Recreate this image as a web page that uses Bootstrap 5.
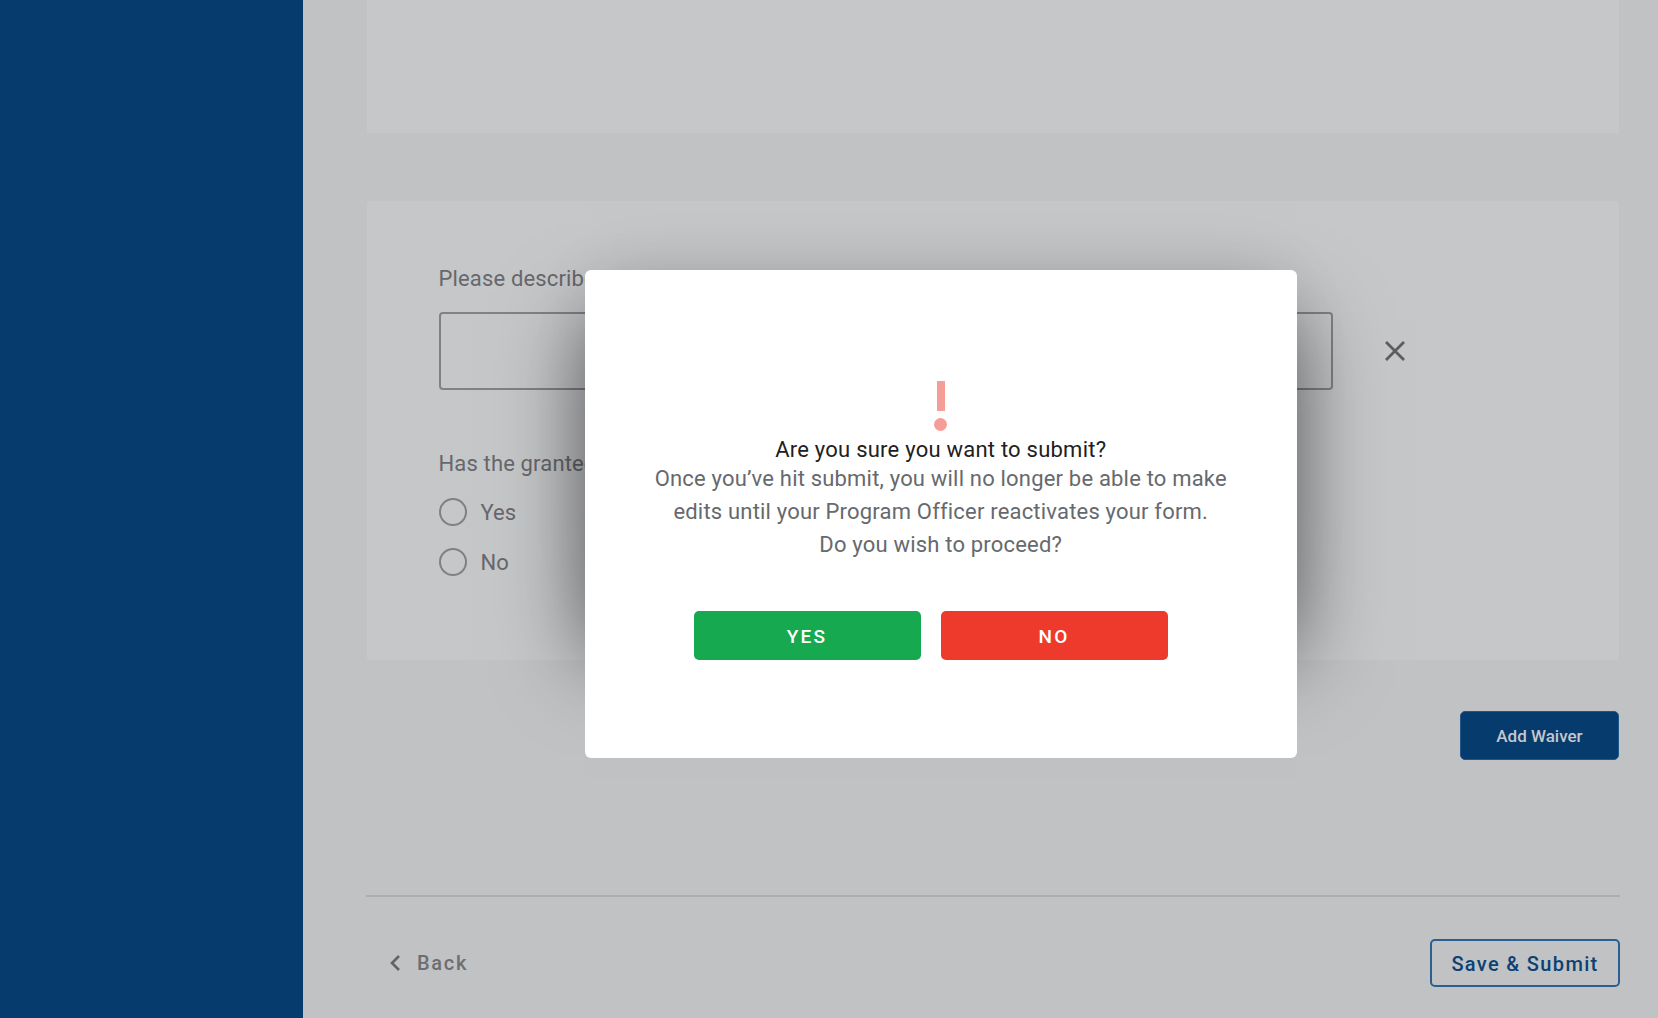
<!DOCTYPE html>
<html>
<head>
    <meta charset="UTF-8">
    <meta name="viewport" content="width=device-width, initial-scale=1">
    <title>Save &amp; Submit</title>
    <link href="https://cdn.jsdelivr.net/npm/bootstrap@5.3.0/dist/css/bootstrap.min.css" rel="stylesheet">
    <style>
        html, body {
            height: 100%;
            overflow: hidden;
        }

        body {
            background-color: #c1c2c4;
            font-family: "Roboto", "Liberation Sans", sans-serif;
            color: #67686c;
        }

        .page-wrap {
            height: 1018px;
        }

        .side-bar {
            width: 302.5px;
            background-color: #063b6d;
        }

        .main-area {
            padding: 0 38px 0 64.5px;
        }

        .panel-top {
            height: 133px;
            margin-right: 1px;
            background-color: #c6c7c9;
        }

        .panel-form {
            height: 459px;
            margin-top: 68px;
            margin-right: 1px;
            padding: 63px 0 0 71.5px;
            background-color: #c6c7c9;
            border-radius: 3px;
        }

        .field-label {
            font-size: 22px;
            line-height: 30px;
            letter-spacing: 0.15px;
            margin-bottom: 18px;
        }

        .desc-box {
            width: 894px;
            height: 78px;
            background-color: transparent;
            border: 2px solid #818286;
            border-radius: 4px;
        }

        .close-x {
            margin-left: 51px;
        }

        .grant-label {
            margin-top: 59px;
            margin-bottom: 0;
        }

        .radio-row {
            height: 50px;
            font-size: 22px;
        }

        .radio-dot {
            width: 28px;
            height: 28px;
            border: 2px solid #808185;
            border-radius: 50%;
            margin-right: 14px;
        }

        .btn-waiver {
            width: 159px;
            height: 49px;
            margin-top: 51px;
            margin-right: 1px;
            padding: 3px 0 0;
            background-color: #063b6d;
            border: 1px solid #225688;
            border-radius: 5px;
            color: #c6c7c9;
            font-size: 17px;
            font-weight: 500;
        }

        .foot-line {
            margin-top: 135px;
            margin-left: -1px;
            border-top: 2px solid #adaeb2;
        }

        .foot-row {
            padding-top: 42px;
        }

        .back-link {
            margin-left: 22px;
            font-size: 20px;
            font-weight: 500;
            letter-spacing: 1.7px;
            color: #6d6e72;
            text-decoration: none;
        }

        .btn-save {
            width: 190px;
            height: 48px;
            padding: 2px 0 0;
            background-color: transparent;
            border: 2px solid #2a5f92;
            border-radius: 5px;
            color: #0c4173;
            font-size: 20px;
            font-weight: 500;
            letter-spacing: 1.35px;
        }

        .confirm-wrap {
            position: absolute;
            left: 584.5px;
            top: 270px;
            width: 712.5px;
            height: 488px;
        }

        /* shadow only shows on the sides, hardly any above and none below */
        .confirm-shade {
            position: absolute;
            top: 50px;
            bottom: 100px;
            left: 0;
            right: 0;
            box-shadow: 0 0 80px rgba(0, 0, 0, 0.55), 0 -60px 70px -20px rgba(0, 0, 0, 0.12);
        }

        .confirm-layer {
            position: relative;
            height: 100%;
            padding-top: 111px;
            background-color: #fff;
            border: 0;
            border-radius: 6px;
        }

        .warn-bar {
            width: 8px;
            height: 30px;
            background-color: #f59d97;
        }

        .warn-dot {
            width: 13px;
            height: 13px;
            margin-top: 7px;
            border-radius: 50%;
            background-color: #f59d97;
        }

        .confirm-title {
            margin: 7px 0 0;
            font-size: 22px;
            font-weight: 400;
            line-height: 24px;
            letter-spacing: 0.23px;
            color: #1f2022;
        }

        .confirm-text {
            margin: 0;
            font-size: 22px;
            line-height: 33px;
            letter-spacing: 0.19px;
            color: #66696d;
        }

        .confirm-btns {
            margin-top: 50px;
            margin-right: 20.5px;
            gap: 20px;
        }

        .btn-answer {
            width: 227px;
            height: 49px;
            padding: 3px 0 0;
            border: 0;
            border-radius: 5px;
            color: #fff;
            font-size: 19px;
            font-weight: 500;
            letter-spacing: 2.2px;
        }

        .btn-answer.is-yes {
            background-color: #17a94f;
        }

        .btn-answer.is-no {
            background-color: #ee3a2c;
        }
    </style>
</head>
<body>
    <div class="page-wrap d-flex">
        <div class="side-bar flex-shrink-0"></div>

        <div class="main-area flex-grow-1">
            <div class="panel-top"></div>

            <div class="panel-form">
                <div class="field-label">Please describe</div>
                <div class="d-flex align-items-center">
                    <div class="desc-box"></div>
                    <svg class="close-x" width="22" height="22" viewBox="0 0 22 22">
                        <path d="M2 2L20 20M20 2L2 20" stroke="#5d5e62" stroke-width="2.8" fill="none"/>
                    </svg>
                </div>
                <div class="field-label grant-label">Has the grantee</div>
                <div class="radio-row d-flex align-items-center mt-2">
                    <span class="radio-dot"></span>Yes
                </div>
                <div class="radio-row d-flex align-items-center">
                    <span class="radio-dot"></span>No
                </div>
            </div>

            <div class="d-flex justify-content-end">
                <button type="button" class="btn btn-waiver">Add Waiver</button>
            </div>

            <div class="foot-line"></div>

            <div class="foot-row d-flex justify-content-between align-items-center">
                <a href="#" class="back-link d-flex align-items-center gap-3">
                    <svg width="12" height="18" viewBox="0 0 12 18">
                        <path d="M10 2L3 9L10 16" stroke="#626367" stroke-width="2.6" fill="none"/>
                    </svg>
                    Back
                </a>
                <button type="button" class="btn btn-save">Save &amp; Submit</button>
            </div>
        </div>
    </div>

    <div class="confirm-wrap">
        <div class="confirm-shade"></div>
        <div class="confirm-layer modal-content d-flex flex-column align-items-center text-center">
            <div class="warn-bar"></div>
            <div class="warn-dot"></div>
            <h5 class="confirm-title">Are you sure you want to submit?</h5>
            <p class="confirm-text">Once you’ve hit submit, you will no longer be able to make<br>edits until your Program Officer reactivates your form.<br>Do you wish to proceed?</p>
            <div class="confirm-btns d-flex">
                <button type="button" class="btn btn-answer is-yes">YES</button>
                <button type="button" class="btn btn-answer is-no">NO</button>
            </div>
        </div>
    </div>

    <script src="https://cdn.jsdelivr.net/npm/bootstrap@5.3.0/dist/js/bootstrap.bundle.min.js"></script>
</body>
</html>
